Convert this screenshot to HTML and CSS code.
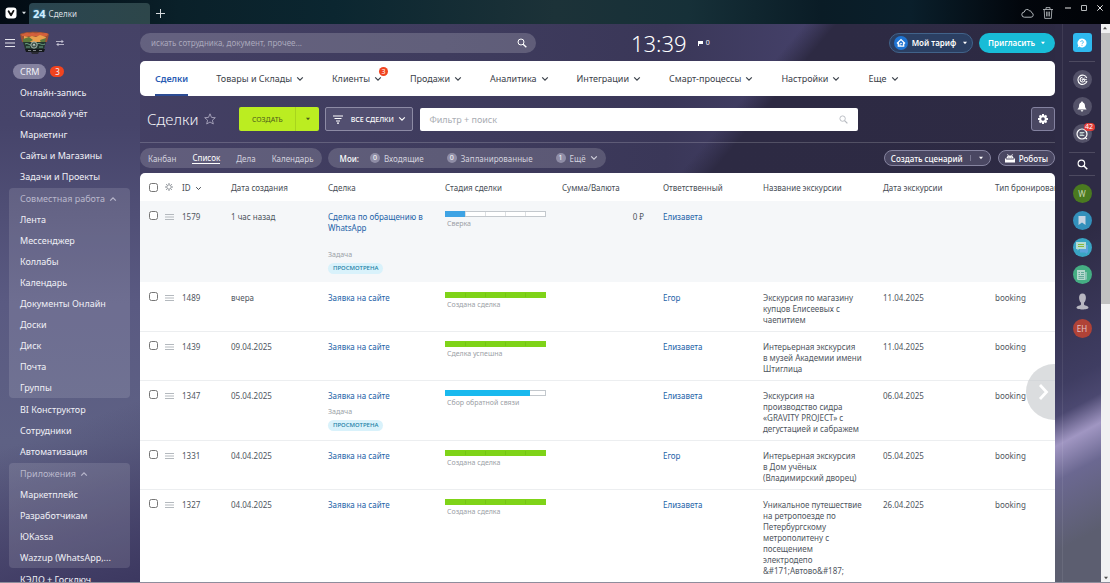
FILE: index.html
```html
<!doctype html>
<html lang="ru">
<head>
	<meta charset="UTF-8" />
	<title>Сделки</title>
	<link rel="stylesheet" href="styles.css">
</head>
<body>
<svg class="defs" aria-hidden="true">
	<symbol id="chevron" viewBox="0 0 8 6"><path d="M1.2 1.4 4 4.2 6.8 1.4" fill="none" stroke="currentColor" stroke-width="1.2"/></symbol>
	<symbol id="caret" viewBox="0 0 6 4"><path d="M1 .8h4L3 3.2z" fill="currentColor"/></symbol>
	<symbol id="lens" viewBox="0 0 12 12"><circle cx="4.8" cy="4.8" r="3.6" fill="none" stroke="currentColor" stroke-width="1.2"/><path d="M7.4 7.4 11.2 11.2" stroke="currentColor" stroke-width="1.6"/></symbol>
	<symbol id="cog" viewBox="0 0 12 12"><circle cx="6" cy="6" r="2.800" fill="none" stroke="currentColor" stroke-width="2"/><path d="M6 1v2M6 9v2M1 6h2M9 6h2M2.500 2.500l1.300 1.300M8.200 8.200l1.300 1.300M2.500 9.500l1.300-1.300M8.200 3.800l1.300-1.300" stroke="currentColor" stroke-width="2"/></symbol>
	<symbol id="drag" viewBox="0 0 9 8"><path d="M0 1.5h9M0 4h9M0 6.5h9" stroke="#b4b9be" stroke-width="1"/></symbol>
</svg>

<div class="browser">
	<button class="browser_logo" aria-label="Меню браузера">
		<svg width="12" height="12" viewBox="0 0 12 12"><rect x=".5" y=".5" width="11" height="11" rx="3" fill="#fff"/><path d="M3.6 4.2 6 8.2 8.5 3.9" fill="none" stroke="#111" stroke-width="1.8" stroke-linecap="round" stroke-linejoin="round"/></svg>
		<svg width="6" height="4"><use href="#caret"/></svg>
	</button>
	<a class="tab" href="#"><b>24</b>Сделки</a>
	<button class="newtab" aria-label="Новая вкладка"><svg width="9" height="9" viewBox="0 0 9 9"><path d="M4.5 0v9M0 4.5h9" stroke="#d5dadd"/></svg></button>
	<div class="browser_tools">
		<svg width="13" height="10" viewBox="0 0 13 10"><path d="M3.5 9.2h6.6a2.3 2.3 0 0 0 .5-4.5 1.6 1.6 0 0 0-2-1.7A2.8 2.8 0 0 0 3.3 4 2.6 2.6 0 0 0 3.5 9.2z" fill="none" stroke="#c3c8cc" stroke-width=".9"/></svg>
		<svg width="10" height="12" viewBox="0 0 10 12"><path d="M0 2.5h10M3 2.3V.6h4v1.7M1.2 2.6l.5 8.8h6.6l.5-8.8M3.6 4.6v4.8M5 4.6v4.8M6.4 4.6v4.8" fill="none" stroke="#c3c8cc" stroke-width=".8"/></svg>
	</div>
	<div class="browser_win">
		<svg width="6" height="6" viewBox="0 0 6 6"><path d="M0 3h6" stroke="#e6e6e6"/></svg>
		<svg width="6" height="6" viewBox="0 0 6 6"><path d="M.5.5h5v5h-5z" fill="none" stroke="#b5b8ba"/></svg>
		<svg width="6" height="6" viewBox="0 0 6 6"><path d="M.3.3 5.7 5.7M5.7.3.3 5.7" stroke="#e6e6e6"/></svg>
	</div>
</div>

<div class="page">
	<nav class="side">
		<div class="side_head">
			<button aria-label="Меню"><svg width="10" height="8" viewBox="0 0 10 8"><path d="M0 .5h10M0 4h10M0 7.5h10" stroke="#e4e3ec"/></svg></button>
			<svg class="brand" width="29" height="24" viewBox="0 0 29 24">
				<path d="M0 3c5-3 24-3 29 0l-2 8H2z" fill="#9b5136"/>
				<path d="M1 3c3 1 4-2 7-1s4-1 6 0 6-1 8 0 4-1 6 1l-1 2H2z" fill="#d2603b"/>
				<path d="M4 5l5 1 3-1 4 1 4-2 6 2-2 5H4z" fill="#e9a04c"/>
				<path d="M3 8l6-2 4 3-5 3H3zM20 9l6-2-1 4-4 1z" fill="#5d7a3d"/>
				<path d="M3 11h23l-2 7H5z" fill="#23362f"/>
				<path d="M5 13c3-2 5 3 8 0M17 13c3-2 4 2 8 0M6 16h4M19 16h4" stroke="#6fa487" fill="none"/>
				<circle cx="14" cy="14" r="3.2" fill="#41564e" stroke="#b9c8bc" stroke-width=".8"/>
				<path d="M12.5 14.5l1.5-2 1.5 2z" fill="#dfe4d8"/>
				<path d="M5 18h20l-1 3H6z" fill="#15191b"/><path d="M8 19.500h3M13 19.500h3M19 19.500h3" stroke="#7b8086"/>
				<path d="M11 21h8l-1 2h-6z" fill="#2a2a33"/>
			</svg>
			<svg width="8" height="8" viewBox="0 0 8 8"><path d="M0 2.500h6M8 5.500H2" stroke="#c4c2d3" stroke-width=".9"/><path d="M5.500.8 7.800 2.500 5.500 4.200zM2.500 3.800.2 5.500 2.500 7.200z" fill="#c4c2d3"/></svg>
		</div>
		<ul>
			<li><a class="on" href="#">CRM</a><span class="count">3</span></li>
			<li><a href="#">Онлайн-запись</a></li>
			<li><a href="#">Складской учёт</a></li>
			<li><a href="#">Маркетинг</a></li>
			<li><a href="#">Сайты и Магазины</a></li>
			<li><a href="#">Задачи и Проекты</a></li>
		</ul>
		<ul class="group">
			<li class="group_head"><a href="#">Совместная работа</a><svg class="up" width="8" height="6"><use href="#chevron"/></svg></li>
			<li><a href="#">Лента</a></li>
			<li><a href="#">Мессенджер</a></li>
			<li><a href="#">Коллабы</a></li>
			<li><a href="#">Календарь</a></li>
			<li><a href="#">Документы Онлайн</a></li>
			<li><a href="#">Доски</a></li>
			<li><a href="#">Диск</a></li>
			<li><a href="#">Почта</a></li>
			<li><a href="#">Группы</a></li>
		</ul>
		<ul>
			<li><a href="#">BI Конструктор</a></li>
			<li><a href="#">Сотрудники</a></li>
			<li><a href="#">Автоматизация</a></li>
		</ul>
		<ul class="group">
			<li class="group_head"><a href="#">Приложения</a><svg class="up" width="8" height="6"><use href="#chevron"/></svg></li>
			<li><a href="#">Маркетплейс</a></li>
			<li><a href="#">Разработчикам</a></li>
			<li><a href="#">ЮKassa</a></li>
			<li><a href="#">Wazzup (WhatsApp,...</a></li>
		</ul>
		<ul>
			<li><a href="#">КЭДО + Госключ</a></li>
		</ul>
	</nav>

	<main class="main">
		<header class="top">
			<label class="search"><input type="text" placeholder="искать сотрудника, документ, прочее..." aria-label="Поиск"><svg width="10" height="10"><use href="#lens" width="10" height="10"/></svg></label>
			<div class="clock">13:39</div>
			<div class="flag"><svg width="5" height="6" viewBox="0 0 5 6"><path d="M0 1h5v3H1v2H0z" fill="#fff"/></svg>0</div>
			<button class="tariff"><svg width="14" height="14" viewBox="0 0 14 14"><circle cx="7" cy="7" r="7" fill="#1f74d2"/><path d="M3 7.500 7 3.600l4 3.900M4.300 6.800v3.400h5.400V6.800" fill="none" stroke="#fff" stroke-width="1.300"/><path d="M6 10V8.200a1 1 0 0 1 2 0" fill="none" stroke="#fff"/></svg>Мой тариф<svg width="6" height="4"><use href="#caret"/></svg></button>
			<button class="invite">Пригласить<svg width="6" height="4"><use href="#caret"/></svg></button>
		</header>

		<nav class="menu">
			<a class="on" href="#">Сделки</a>
			<a href="#">Товары и Склады<svg width="8" height="6"><use href="#chevron"/></svg></a>
			<a href="#">Клиенты<svg width="8" height="6"><use href="#chevron"/></svg><span class="menu_count">3</span></a>
			<a href="#">Продажи<svg width="8" height="6"><use href="#chevron"/></svg></a>
			<a href="#">Аналитика<svg width="8" height="6"><use href="#chevron"/></svg></a>
			<a href="#">Интеграции<svg width="8" height="6"><use href="#chevron"/></svg></a>
			<a href="#">Смарт-процессы<svg width="8" height="6"><use href="#chevron"/></svg></a>
			<a href="#">Настройки<svg width="8" height="6"><use href="#chevron"/></svg></a>
			<a href="#">Еще<svg width="8" height="6"><use href="#chevron"/></svg></a>
		</nav>

		<div class="title">
			<h1>Сделки</h1>
			<button class="star" aria-label="В избранное"><svg width="12" height="12" viewBox="0 0 12 12"><path d="M6 .8 7.500 4.400l3.800.3-2.900 2.500.9 3.800L6 9 2.700 11l.9-3.800L.7 4.700l3.800-.3z" fill="none" stroke="#a9a6bd" stroke-width=".9"/></svg></button>
			<div class="create"><button>Создать</button><button aria-label="Ещё варианты"><svg width="6" height="4"><use href="#caret"/></svg></button></div>
			<button class="funnel"><svg width="10" height="9" viewBox="0 0 10 9"><path d="M0 1h10M1.500 3.500h7M3 6h4M4 8.200h2" stroke="#fff" stroke-width="1.200"/></svg>Все сделки<svg width="8" height="6"><use href="#chevron"/></svg></button>
			<label class="filter"><input type="text" placeholder="Фильтр + поиск" aria-label="Фильтр + поиск"><svg width="9" height="9"><use href="#lens" width="9" height="9"/></svg></label>
			<button class="settings" aria-label="Настройки"><svg width="12" height="12"><use href="#cog"/></svg></button>
		</div>

		<div class="views">
			<div class="pill">
				<a href="#">Канбан</a><a class="on" href="#">Список</a><a href="#">Дела</a><a href="#">Календарь</a>
			</div>
			<div class="pill counters">
				<b>Мои:</b>
				<a href="#"><i>0</i>Входящие</a>
				<a href="#"><i>0</i>Запланированные</a>
				<a href="#"><i>1</i>Ещё<svg width="8" height="6"><use href="#chevron"/></svg></a>
			</div>
			<button class="round scenario">Создать сценарий<span></span><svg width="6" height="4"><use href="#caret"/></svg></button>
			<button class="round"><svg width="10" height="9" viewBox="0 0 10 9"><path d="M1.500 4.500a3.500 3 0 0 1 7 0zM0 4.500h1.200v1h7.600v-1H10v4H0z" fill="#fff"/><path d="M2.500.2 3.500 2M7.500.2 6.500 2" stroke="#fff" stroke-width=".8"/><path d="M3.500 3.200h.8M5.800 3.200h.8" stroke="#4a4762" stroke-width=".8"/></svg>Роботы</button>
		</div>

		<div class="grid">
			<table>
				<colgroup>
					<col class="c_check"><col class="c_drag"><col class="c_id"><col class="c_date"><col class="c_deal"><col class="c_stage"><col class="c_sum"><col class="c_user"><col class="c_name"><col class="c_tour"><col>
				</colgroup>
				<thead>
					<tr>
						<th><input type="checkbox" aria-label="Выбрать все"></th>
						<th><svg class="gear" width="8" height="8" viewBox="0 0 12 12"><circle cx="6" cy="6" r="3.300" fill="none" stroke="#8b9096" stroke-width="1.300"/><path d="M6 0v2.500M6 9.500V12M0 6h2.500M9.500 6H12M1.800 1.800l1.700 1.700M8.500 8.500l1.700 1.700M1.800 10.200l1.700-1.700M8.500 3.500l1.700-1.700" stroke="#8b9096" stroke-width="1.500"/></svg></th>
						<th>ID<svg class="sort" width="7" height="5" viewBox="0 0 8 6"><use href="#chevron" width="8" height="6"/></svg></th>
						<th>Дата создания</th>
						<th>Сделка</th>
						<th>Стадия сделки</th>
						<th>Сумма/Валюта</th>
						<th>Ответственный</th>
						<th>Название экскурсии</th>
						<th>Дата экскурсии</th>
						<th>Тип бронирования</th>
					</tr>
				</thead>
				<tbody>
					<tr class="hover">
						<td><input type="checkbox" aria-label="1579"></td>
						<td><svg class="drag" width="9" height="8"><use href="#drag"/></svg></td>
						<td>1579</td>
						<td>1 час назад</td>
						<td><a href="#">Сделка по обращению в WhatsApp</a><div class="task spaced">Задача</div><span class="seen">Просмотрена</span></td>
						<td><div class="bar blue"><span style="width:20%"></span></div><div class="stage">Сверка</div></td>
						<td class="sum">0 ₽</td>
						<td><a href="#">Елизавета</a></td>
						<td></td>
						<td></td>
						<td></td>
					</tr>
					<tr>
						<td><input type="checkbox" aria-label="1489"></td>
						<td><svg class="drag" width="9" height="8"><use href="#drag"/></svg></td>
						<td>1489</td>
						<td>вчера</td>
						<td><a href="#">Заявка на сайте</a></td>
						<td><div class="bar green"></div><div class="stage">Создана сделка</div></td>
						<td class="sum"></td>
						<td><a href="#">Егор</a></td>
						<td>Экскурсия по магазину купцов Елисеевых с чаепитием</td>
						<td>11.04.2025</td>
						<td>booking</td>
					</tr>
					<tr>
						<td><input type="checkbox" aria-label="1439"></td>
						<td><svg class="drag" width="9" height="8"><use href="#drag"/></svg></td>
						<td>1439</td>
						<td>09.04.2025</td>
						<td><a href="#">Заявка на сайте</a></td>
						<td><div class="bar green"></div><div class="stage">Сделка успешна</div></td>
						<td class="sum"></td>
						<td><a href="#">Елизавета</a></td>
						<td>Интерьерная экскурсия в&nbsp;музей Академии имени Штиглица</td>
						<td>11.04.2025</td>
						<td>booking</td>
					</tr>
					<tr>
						<td><input type="checkbox" aria-label="1347"></td>
						<td><svg class="drag" width="9" height="8"><use href="#drag"/></svg></td>
						<td>1347</td>
						<td>05.04.2025</td>
						<td><a href="#">Заявка на сайте</a><div class="task">Задача</div><span class="seen">Просмотрена</span></td>
						<td><div class="bar cyan"><span style="width:86%"></span></div><div class="stage">Сбор обратной связи</div></td>
						<td class="sum"></td>
						<td><a href="#">Елизавета</a></td>
						<td>Экскурсия на производство сидра «GRAVITY PROJECT» с дегустацией и сабражем</td>
						<td>06.04.2025</td>
						<td>booking</td>
					</tr>
					<tr>
						<td><input type="checkbox" aria-label="1331"></td>
						<td><svg class="drag" width="9" height="8"><use href="#drag"/></svg></td>
						<td>1331</td>
						<td>04.04.2025</td>
						<td><a href="#">Заявка на сайте</a></td>
						<td><div class="bar green"></div><div class="stage">Создана сделка</div></td>
						<td class="sum"></td>
						<td><a href="#">Егор</a></td>
						<td>Интерьерная экскурсия в&nbsp;Дом учёных (Владимирский дворец)</td>
						<td>05.04.2025</td>
						<td>booking</td>
					</tr>
					<tr>
						<td><input type="checkbox" aria-label="1327"></td>
						<td><svg class="drag" width="9" height="8"><use href="#drag"/></svg></td>
						<td>1327</td>
						<td>04.04.2025</td>
						<td><a href="#">Заявка на сайте</a></td>
						<td><div class="bar green"></div><div class="stage">Создана сделка</div></td>
						<td class="sum"></td>
						<td><a href="#">Елизавета</a></td>
						<td>Уникальное путешествие на ретропоезде по Петербургскому метрополитену с посещением электродепо &amp;#171;Автово&amp;#187;</td>
						<td>26.04.2025</td>
						<td>booking</td>
					</tr>
				</tbody>
			</table>
			<button class="next" aria-label="Прокрутить вправо"><svg width="12" height="18" viewBox="0 0 12 18"><path d="M2 2l6.500 7L2 16" fill="none" stroke="#fff" stroke-width="2.800"/></svg></button>
		</div>
	</main>

	<aside class="rail">
		<div class="rail_help"><button class="help" aria-label="Помощь"><svg width="10" height="10" viewBox="0 0 10 10"><path d="M5 .5a4.500 4.500 0 1 1-2.700 8.100L.5 9.500l.8-2A4.500 4.500 0 0 1 5 .5z" fill="#fff"/><path d="M3.700 4a1.300 1.300 0 1 1 2 1.100c-.5.300-.7.500-.7 1M5 6.900v.9" fill="none" stroke="#2fb9ee" stroke-width=".9"/></svg></button></div>
		<div class="rail_group">
			<button class="ico" aria-label="CoPilot"><svg width="11" height="11" viewBox="0 0 11 11"><path d="M9.800 4A4.600 4.600 0 1 0 10 7M5.500 3.200a2.400 2.400 0 1 0 2.300 3.200" fill="none" stroke="#fff" stroke-width="1.100"/><path d="M4.500 5.500h5.300M5.500 4l3 3.500M7.800 3.500 5 7" stroke="#fff" stroke-width=".8"/></svg></button>
			<button class="ico" aria-label="Уведомления"><svg width="10" height="11" viewBox="0 0 10 11"><path d="M5 .5c.7 0 .9.400.9.900C7.600 1.900 8 3.400 8 5c0 1.800.6 2.200 1.400 3v.6H.6V8C1.400 7.200 2 6.800 2 5c0-1.600.4-3.100 2.100-3.600 0-.5.2-.9.900-.9zM3.700 9.200h2.600a1.300 1.300 0 0 1-2.600 0z" fill="#fff"/></svg></button>
			<button class="ico" aria-label="Мессенджер"><svg width="12" height="12" viewBox="0 0 12 12"><path d="M6 1a5 5 0 1 1 0 10 5 5 0 1 1 0-10zM9 9.500l2 1.500" fill="none" stroke="#fff" stroke-width="1.200"/><path d="M3.700 4.500h4.600M3.700 6h3.600M3.700 7.500h4.600" stroke="#cfe3dd" stroke-width=".9"/></svg><span class="unread">42</span></button>
		</div>
		<div class="rail_find"><button class="find" aria-label="Найти"><svg width="11" height="11"><use href="#lens" width="11" height="11"/></svg></button></div>
		<div class="rail_group">
			<button class="ico w">W</button>
			<button class="ico book" aria-label="Закладки"><svg width="8" height="9" viewBox="0 0 8 9"><path d="M.5 0h7v9L4 6.500.5 9z" fill="#c6d4e2"/></svg></button>
			<button class="ico chat" aria-label="Чат"><svg width="14" height="12" viewBox="0 0 14 12"><path d="M5 3h8v7.500h-1V12l-2-1.500H5z" fill="#5ba3dc"/><path d="M1 0h10v7H4L2.500 8.500V7H1z" fill="#b7dcd3"/><path d="M3 2.500h6M3 4.500h6" stroke="#8bb93c"/></svg></button>
			<button class="ico news" aria-label="Новости"><svg width="12" height="12" viewBox="0 0 12 12"><path d="M1 1h8v10H2.500A1.500 1.500 0 0 1 1 9.500z" fill="#b5d8cd"/><path d="M9 3h2v6.500A1.500 1.500 0 0 1 9.500 11H9z" fill="#84c3b1"/><path d="M2.500 3.500H4M5 3.500h3M2.500 5.500H4M5 5.500h3M2.500 7.500h5.500M2.500 9.300h5.500" stroke="#4d9d8a" stroke-width=".8"/></svg></button>
			<button class="ico user" aria-label="Профиль"><svg width="13" height="17" viewBox="0 0 13 17"><path d="M6.500.5c2.400 0 3.500 1.800 3.400 4.500-.1 2.300-1 4-1.900 4.800v1.700c0 1 4.500 1.200 4.500 3.300 0 1-3 1.700-6 1.700s-6-.7-6-1.700c0-2.100 4.500-2.300 4.500-3.300V9.800C4.100 9 3.200 7.300 3.100 5 3 2.300 4.100.5 6.500.5z" fill="#b8b7c1"/></svg></button>
			<button class="ico eh">EH</button>
		</div>
	</aside>

	<div class="scroll"><span class="scroll_arrow up"><svg width="6" height="4"><use href="#caret"/></svg></span><span class="scroll_thumb"></span><span class="scroll_arrow"><svg width="6" height="4"><use href="#caret"/></svg></span></div>
</div>
</body>
</html>
```
FILE: styles.css
```css
*{box-sizing:border-box;}
body{margin:0;height:100vh;display:flex;flex-direction:column;overflow:hidden;font:8px/11px "Noto Sans","Open Sans",sans-serif;color:#4f5660;background:#3d3a5c;}
button{display:flex;align-items:center;justify-content:center;margin:0;padding:0;border:0;background:none;font:inherit;color:inherit;white-space:nowrap;}
a{text-decoration:none;color:inherit;}
ul{list-style:none;margin:0;padding:0;}
svg{flex:none;display:block;}
.defs{position:absolute;width:0;height:0;}
.up{transform:rotate(180deg);}

/* browser bar */
.browser{display:flex;align-items:flex-end;flex:none;height:24px;padding-left:3px;color:#d9dfe2;background:linear-gradient(90deg,#020a12,#0a2029 16%,#0b2630 30%,#1c3238 50%,#163038 62%,#0a1c26 74%,#0a1f2b 82%,#02060c 92%,#010307);}
.browser_logo{gap:4px;height:22px;width:26px;align-items:center;}
.tab{display:flex;align-items:center;gap:3px;width:121px;height:21px;padding-left:4px;border-radius:4px 4px 0 0;background:linear-gradient(90deg,#2a4550,#2d464a);}
.tab b{font-size:11px;color:#d2ecfb;text-shadow:0 0 2px #3aa0e0;}
.newtab{width:20px;height:21px;}
.browser_tools{display:flex;align-items:center;gap:9px;height:22px;margin-left:auto;margin-right:12px;}
.browser_win{display:flex;gap:10px;padding-right:7px;align-self:flex-start;margin-top:5px;}

/* page */
.page{display:flex;flex:1;min-height:0;border-bottom:1px solid #8e8d9c;
	background:
	linear-gradient(152deg,#2e2b45 38%,#3f3d62 62%,#4b4870 67%,#a096c2 72%,#6b6891 78%,#5c5e70 90%) right top/55px 100% no-repeat,
	linear-gradient(130deg,transparent 51%,#2d2a43 53%,#2e2b45 100%),
	linear-gradient(160deg,transparent 70%,#3c3860) 0 0/140px 100% no-repeat,
	linear-gradient(180deg,#454266,#46446a 18%,#5a5a82 50%,#5e6184 75%,#56537a 100%) 0 0/140px 100% no-repeat,
	linear-gradient(90deg,#454166,#3f3c5e 40%,#3a3758 60%,#45416a 74%,#3b3859);}

.side{width:140px;flex:none;overflow:hidden;color:#f0f0f6;font-size:9px;}
.side_head{display:flex;align-items:center;gap:5px;height:37px;padding-left:5px;}
.side_head .brand{margin-right:2px;}
.side li{display:flex;align-items:center;gap:4px;height:21px;padding-left:20px;}
.side li .on{margin-left:-7px;padding:2px 7px;border-radius:8px;background:#8582a0;}
.count{width:14px;height:11px;border-radius:6px;background:#f1441f;font-size:8px;text-align:center;}
.side .group{margin:1px 10px 1px 9px;border-radius:4px;background:rgba(255,255,255,.12);}
.side .group li{padding-left:11px;}
.side .group_head{color:#b9b8cc;}

.main{flex:1;min-width:0;display:flex;flex-direction:column;}
.top{display:flex;align-items:center;flex:none;height:37px;color:#fff;}
.search{display:flex;align-items:center;width:396px;height:20px;padding:0 9px 0 11px;border-radius:10px;background:rgba(255,255,255,.18);}
input[type=text]{flex:1;min-width:0;border:0;padding:0;outline:0;background:none;font:inherit;color:inherit;}
.search input::placeholder{color:#aaa8bc;opacity:1;}
.clock{margin-left:95px;font-size:22px;line-height:28px;font-weight:300;}
.flag{display:flex;align-items:center;gap:3px;margin-left:11px;font-size:7px;}
.tariff,.invite{height:20px;border-radius:10px;font-weight:600;gap:5px;}
.tariff{margin-left:auto;width:84px;gap:4px;border:1px solid #41638a;background:#2b3f62;}
.tariff svg:last-child{margin-left:2px;}
.invite{margin-left:6px;width:76px;background:#18bcd7;}

.menu{display:flex;align-items:stretch;gap:28px;flex:none;height:35px;padding-left:15px;border-radius:5px;background:#fff;font-size:9px;color:#3b414a;overflow:hidden;}
.menu a{display:flex;align-items:center;gap:4px;position:relative;white-space:nowrap;}
.menu .on{color:#2a5cb4;font-weight:600;border-bottom:2px solid #2c4c94;padding-top:2px;}
.menu_count{position:absolute;top:6px;right:-6px;width:9px;height:9px;border-radius:5px;background:#f1441f;color:#fff;font-size:7px;line-height:9px;text-align:center;}

.title{display:flex;align-items:center;flex:none;height:47px;padding-left:7px;border-bottom:1px solid rgba(255,255,255,.18);}
h1{margin:0;font-size:15px;line-height:24px;font-weight:300;color:#f4f4f8;}
.star{margin:0 23px 0 6px;}
.create{display:flex;height:24px;border-radius:2px;background:#bbed21;color:#4c5c1c;font-size:7px;overflow:hidden;}
.create button{width:56px;text-transform:uppercase;}
.create button + button{width:24px;border-left:1px solid #a8d51d;}
.funnel{width:88px;height:24px;margin:0 7px 0 6px;gap:8px;border:1px solid #8d8ba5;border-radius:2px;background:#524f70;color:#fff;font-size:7px;font-weight:500;text-transform:uppercase;}
.funnel svg:last-child{margin-left:-4px;}
.filter{display:flex;align-items:center;flex:1;height:23px;margin-right:173px;padding:0 10px 0 9px;border-radius:2px;background:#fff;color:#b5b9bf;font-size:9px;}
.filter input::placeholder{color:#a9adb3;opacity:1;}
.settings{width:24px;height:24px;border:1px solid #8482a0;border-radius:3px;background:#4a4762;color:#fff;}

.views{display:flex;align-items:center;flex:none;height:30px;color:#d3d2de;}
.pill{display:flex;align-items:center;height:20px;padding:0 8px;gap:16px;border-radius:10px;background:rgba(255,255,255,.16);white-space:nowrap;}
.pill .on{color:#fff;border-bottom:1px solid #fff;}
.counters{margin-left:6px;padding-left:12px;gap:11px;}
.counters b{font-weight:500;color:#fff;}
.counters a{display:flex;align-items:center;gap:4px;}
.counters a + a{margin-left:12px;}
.counters i{width:10px;height:10px;border-radius:5px;background:#8f8da6;color:#fff;font-style:normal;font-size:7px;line-height:10px;text-align:center;}
.round{height:16px;margin-left:7px;padding:0 6px;gap:4px;border:1px solid #8684a0;border-radius:8px;background:#4a4762;color:#fff;font-weight:500;}
.scenario{margin-left:auto;gap:7px;}
.scenario span{width:1px;height:6px;background:#7a7892;}

/* deals table */
.grid{position:relative;flex:1;min-height:0;overflow:hidden;border-radius:5px 5px 0 0;background:#fff;}
table{width:100%;table-layout:fixed;border-collapse:separate;border-spacing:0;}
th{height:28px;padding:0;font-weight:400;text-align:left;white-space:nowrap;color:#474d55;}
td{padding:9px 0 6px;vertical-align:top;border-bottom:1px solid #eceef0;}
td:nth-child(5),td:nth-child(9){padding-right:16px;}
td:nth-child(9){padding-right:20px;}
th:first-child,td:first-child{padding-left:9px;}
.c_check{width:25px;}
.c_drag{width:17px;}
.c_id{width:49px;}
.c_date{width:97px;}
.c_deal,.c_stage{width:117px;}
.c_sum{width:101px;}
.c_user{width:100px;}
.c_name{width:120px;}
.c_tour{width:112px;}
td a{color:#2363a8;}
td input,th input{display:block;width:9px;height:9px;margin:0;}
.drag{margin-top:2px;}
.sort{display:inline-block;margin-left:4px;}
.hover td{height:82px;padding-top:10px;background:#f5f7f9;border-bottom-color:#fff;}
.task{margin-top:5px;font-size:7px;color:#9a9fa6;}
.spaced{margin-top:16px;}
.seen{display:inline-block;height:11px;margin-top:3px;padding:0 5px;border-radius:6px;background:#d9f2fb;color:#1c7ea6;font-size:6px;font-weight:500;text-transform:uppercase;vertical-align:top;}
.bar{display:flex;width:101px;height:6px;border:1px solid #c3c8cd;background:repeating-linear-gradient(90deg,#fff 0 19px,#dcdfe2 19px 20px);}
.bar span{margin:-1px 0 -1px -1px;}
.blue span{background:#3ea3e4;}
.cyan{background:#fff;}
.cyan span{background:#19b9ee;}
.green{border-color:#7fd318;background:repeating-linear-gradient(90deg,#7fd318 0 19px,#75c415 19px 20px);}
.stage{margin:1px 0 0 2px;font-size:7px;color:#9ba0a6;}
.sum{text-align:right;padding-right:19px;}
.next{position:absolute;right:0;top:191px;width:29px;height:56px;padding-left:6px;border-radius:28px 0 0 28px;background:rgba(200,203,206,.65);}

/* right rail */
.rail{flex:none;width:39px;margin-left:7px;display:flex;flex-direction:column;align-items:stretch;color:#fff;border-left:1px solid rgba(255,255,255,.08);}
.rail button{margin:0 auto;}
.rail_help,.rail_find{margin:0 6px;border-bottom:1px solid rgba(255,255,255,.15);}
.rail_help{height:38px;padding-top:9px;}
.help{width:19px;height:19px;border-radius:3px;background:#2fb9ee;}
.rail_group{display:flex;flex-direction:column;gap:8px;padding:8px 0 9px;}
.rail_find{height:24px;border-top:1px solid rgba(255,255,255,.15);display:flex;}
.ico{position:relative;width:19px;height:19px;border-radius:10px;background:#545269;color:#c6d4b0;}
.rail .unread{position:absolute;top:-1px;right:-3px;width:11px;height:8px;border-radius:4px;background:#e23b37;color:#fff;font-size:7px;line-height:8px;}
.w{background:#4a7a20;}
.book{background:#3390bb;}
.chat{background:#3aa5c4;}
.news{background:#45ae83;}
.user{background:none;}
.eh{background:#b04237;color:#e3c3c8;}

.scroll{flex:none;width:9px;display:flex;flex-direction:column;background:#f1f1f2;color:#50504f;}
.scroll_arrow{display:flex;align-items:center;justify-content:center;height:9px;}
.scroll_thumb{height:271px;margin-bottom:auto;background:#c1c1c1;}
```
